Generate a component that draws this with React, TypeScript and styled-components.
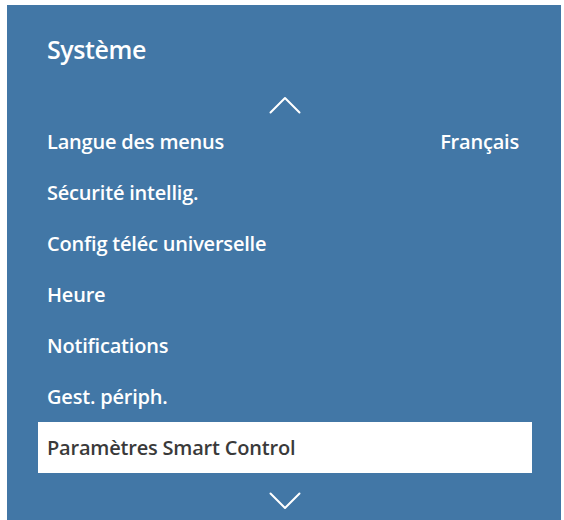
import * as React from "react";
import styled, { createGlobalStyle } from "styled-components";

const GlobalStyle = createGlobalStyle`
  html, body {
    margin: 0;
    padding: 0;
    background: #ffffff;
  }
  body {
    font-family: "Open Sans", "Lato", sans-serif;
  }
`;

const Page = styled.div`
  width: 564px;
  height: 520px;
  padding: 5px 3px 0 7px;
  box-sizing: border-box;
  overflow: hidden;
`;

const Panel = styled.div`
  display: flex;
  flex-direction: column;
  height: 100%;
  background: #4277a6;
  padding: 0 29px 0 31px;
  box-sizing: border-box;
  overflow: hidden;
`;

const Title = styled.h1`
  margin: 0;
  height: 88px;
  flex-shrink: 0;
  display: flex;
  align-items: center;
  padding-left: 9px;
  font-size: 25px;
  font-weight: 600;
  letter-spacing: -0.4px;
  color: #ffffff;
`;

const Arrow = styled.div<{ $h: number }>`
  display: flex;
  flex-shrink: 0;
  justify-content: center;
  align-items: center;
  height: ${(p) => p.$h}px;
`;

const List = styled.div`
  display: flex;
  flex-direction: column;
  flex-shrink: 0;
`;

const Row = styled.div<{ $selected?: boolean }>`
  display: flex;
  align-items: center;
  justify-content: space-between;
  height: 51px;
  padding: 0 13px 0 9px;
  font-size: 20px;
  font-weight: 600;
  letter-spacing: -0.2px;
  color: ${(p) => (p.$selected ? "#3a3a3a" : "#ffffff")};
  background: ${(p) => (p.$selected ? "#ffffff" : "transparent")};
`;

const Value = styled.span`
  color: #ffffff;
`;

interface Item {
  label: string;
  value?: string;
  selected?: boolean;
}

const items: Item[] = [
  { label: "Langue des menus", value: "Français" },
  { label: "Sécurité intellig." },
  { label: "Config téléc universelle" },
  { label: "Heure" },
  { label: "Notifications" },
  { label: "Gest. périph." },
  { label: "Paramètres Smart Control", selected: true },
];

const Chevron = ({ up }: { up?: boolean }) => (
  <svg width="32" height="18" viewBox="0 0 32 18" fill="none">
    <path
      d={up ? "M1.5 16.5 L16 2 L30.5 16.5" : "M1.5 1.5 L16 16 L30.5 1.5"}
      stroke="#ffffff"
      strokeWidth="2"
      strokeLinecap="round"
      strokeLinejoin="round"
    />
  </svg>
);

const App = () => (
  <Page>
    <GlobalStyle />
    <Panel>
      <Title>Système</Title>
      <Arrow $h={23}>
        <Chevron up />
      </Arrow>
      <List>
        {items.map((it) => (
          <Row key={it.label} $selected={it.selected}>
            <span>{it.label}</span>
            {it.value && <Value>{it.value}</Value>}
          </Row>
        ))}
      </List>
      <Arrow $h={56}>
        <Chevron />
      </Arrow>
    </Panel>
  </Page>
);

export default App;
